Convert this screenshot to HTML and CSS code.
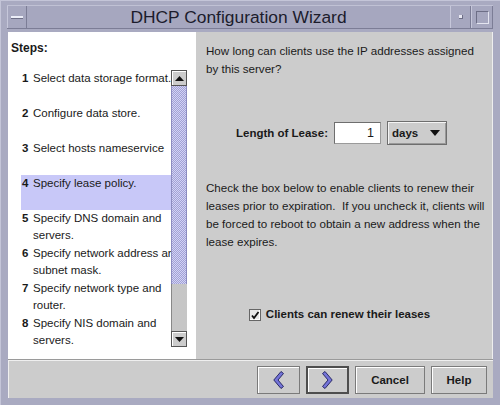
FILE: index.html
```html
<!DOCTYPE html>
<html>
<head>
<meta charset="utf-8">
<link rel="stylesheet" href="styles.css">
</head>
<body>
<div class="window">
  <div class="titlebar">
    <div class="tb-btn tb-menu"><span class="dash"></span></div>
    <div class="title">DHCP Configuration Wizard</div>
    <div class="tb-btn tb-min"><span class="dot"></span></div>
    <div class="tb-btn tb-max"><span class="sq"></span></div>
  </div>
  <div class="client">
    <div class="main">
      <div class="steps">
        <div class="steps-head">Steps:</div>
        <div class="scrollpane">
          <div class="list">
            <div class="item"><b class="num">1</b><span class="txt">Select data storage format.</span></div>
            <div class="item"><b class="num">2</b><span class="txt">Configure data store.</span></div>
            <div class="item"><b class="num">3</b><span class="txt">Select hosts nameservice</span></div>
            <div class="item selected"><b class="num">4</b><span class="txt">Specify lease policy.</span></div>
            <div class="item"><b class="num">5</b><span class="txt">Specify DNS domain and servers.</span></div>
            <div class="item"><b class="num">6</b><span class="txt">Specify network address and subnet mask.</span></div>
            <div class="item"><b class="num">7</b><span class="txt">Specify network type and router.</span></div>
            <div class="item"><b class="num">8</b><span class="txt">Specify NIS domain and servers.</span></div>
          </div>
          <div class="scrollbar">
            <div class="sb-btn"><svg width="9" height="5" viewBox="0 0 9 5"><path d="M0 5 L4.5 0 L9 5 Z" fill="#111"/></svg></div>
            <div class="sb-thumb"></div>
            <div class="sb-track"></div>
            <div class="sb-btn"><svg width="9" height="5" viewBox="0 0 9 5"><path d="M0 0 L4.5 5 L9 0 Z" fill="#111"/></svg></div>
          </div>
        </div>
      </div>
      <div class="content">
        <p class="question">How long can clients use the IP addresses assigned<br>by this server?</p>
        <div class="lease-row">
          <span class="lease-label">Length of Lease:</span>
          <span class="field">1</span>
          <span class="combo"><span class="combo-text">days</span><svg width="10" height="6" viewBox="0 0 10 6"><path d="M0 0 L10 0 L5 6 Z" fill="#111"/></svg></span>
        </div>
        <p class="info">Check the box below to enable clients to renew their<br>leases prior to expiration.&nbsp; If you uncheck it, clients will<br>be forced to reboot to obtain a new address when the<br>lease expires.</p>
        <div class="check-row">
          <span class="checkbox"><svg width="10" height="10" viewBox="0 0 10 10"><path d="M2 5.5 L4 8 L8.5 2" fill="none" stroke="#111" stroke-width="1.8"/></svg></span>
          <span class="check-label">Clients can renew their leases</span>
        </div>
      </div>
    </div>
    <div class="buttons">
      <button class="btn btn-nav"><svg width="11" height="18" viewBox="0 0 11 18"><path d="M8 0.5 L10.5 2.5 L5 9 L10.5 15.5 L8 17.5 L0.8 9 Z" fill="#7474d8" stroke="#2a2a66" stroke-width="1"/></svg></button>
      <button class="btn btn-nav btn-default"><svg width="11" height="18" viewBox="0 0 11 18"><path d="M3 0.5 L0.5 2.5 L6 9 L0.5 15.5 L3 17.5 L10.2 9 Z" fill="#7474d8" stroke="#2a2a66" stroke-width="1"/></svg></button>
      <button class="btn btn-cancel">Cancel</button>
      <button class="btn btn-help">Help</button>
    </div>
  </div>
</div>
</body>
</html>
```
FILE: styles.css
```css
html, body {
  margin: 0;
  padding: 0;
}
body {
  width: 500px;
  height: 405px;
  overflow: hidden;
  font-family: "Liberation Sans", Arial, sans-serif;
  font-size: 11.5px;
  color: #1a1a1a;
}
.window {
  width: 500px;
  height: 405px;
  box-sizing: border-box;
  background: #a9aac1;
  padding: 0 7px 7px 7px;
  display: flex;
  flex-direction: column;
  border-left: 1px solid #c4c5d8;
  border-top: 1px solid #c4c5d8;
}
.titlebar {
  height: 22px;
  margin-top: 4px;
  margin-bottom: 3px;
  margin-left: -1px;
  display: flex;
  align-items: stretch;
  background: #a6a7bf;
  border-top: 1px solid #c0c1d4;
  border-bottom: 1px solid #7c7d96;
}
.tb-btn {
  width: 20px;
  box-sizing: border-box;
  border-left: 1px solid #c6c7da;
  border-right: 1px solid #7c7d96;
  display: flex;
  align-items: center;
  justify-content: center;
}
.dash {
  width: 12px;
  height: 2px;
  background: #eceef8;
  border-bottom: 1px solid #6d6e86;
}
.title {
  flex: 1;
  text-align: center;
  font-size: 17.4px;
  line-height: 22px;
  color: #1c1c2c;
}
.tb-min {
  width: 21px;
}
.dot {
  width: 3px;
  height: 3px;
  background: #e8e8f2;
  border-right: 1px solid #6d6e86;
  border-bottom: 1px solid #6d6e86;
}
.tb-max {
  width: 22px;
}
.sq {
  width: 11px;
  height: 11px;
  border-top: 1px solid #6d6e86;
  border-left: 1px solid #6d6e86;
  border-right: 1px solid #e4e5f0;
  border-bottom: 1px solid #e4e5f0;
}
.client {
  flex: 1;
  display: flex;
  flex-direction: column;
  background: #cccccc;
}
.main {
  height: 327px;
  display: flex;
}
.steps {
  width: 188px;
  background: #ffffff;
  display: flex;
  flex-direction: column;
}
.steps-head {
  font-weight: bold;
  font-size: 12px;
  line-height: 15px;
  padding: 9px 0 0 3px;
  height: 15px;
  margin-bottom: 14px;
}
.scrollpane {
  margin-left: 13px;
  height: 277px;
  display: flex;
}
.list {
  width: 150px;
  overflow: hidden;
}
.item {
  width: 175px;
  height: 35px;
  line-height: 17px;
  display: grid;
  grid-template-columns: 12px 158px;
  align-content: start;
}
.item.selected {
  background: #c8c8f8;
}
.num {
  padding-left: 1px;
  font-weight: bold;
}
.scrollbar {
  width: 16px;
  display: flex;
  flex-direction: column;
}
.sb-btn {
  height: 16px;
  box-sizing: border-box;
  background: #cccccc;
  border: 1px solid #555555;
  box-shadow: inset 1px 1px #ffffff;
  display: flex;
  align-items: center;
  justify-content: center;
}
.sb-thumb {
  height: 198px;
  box-sizing: border-box;
  border-left: 1px solid #8c8cbf;
  border-right: 1px solid #8c8cbf;
  background-color: #bdbde6;
  background-image: repeating-conic-gradient(#a2a2d4 0 25%, #d2d2f6 0 50%);
  background-size: 2px 2px;
}
.sb-track {
  flex: 1;
  background: #c6c6c6;
  border-left: 1px solid #888888;
}
.content {
  flex: 1;
  padding: 10px 7px 0 10px;
  border-right: 1px solid #eeeeee;
}
.question, .info {
  margin: 0;
  line-height: 18px;
  font-size: 11.6px;
}
.lease-row {
  margin-top: 43px;
  height: 24px;
  display: flex;
  align-items: center;
  justify-content: center;
  gap: 6px;
  padding-right: 8px;
}
.lease-label {
  font-weight: bold;
}
.field {
  width: 47px;
  height: 22px;
  box-sizing: border-box;
  background: #ffffff;
  border: 1px solid #6e6e6e;
  border-right-color: #9a9a9a;
  border-bottom-color: #9a9a9a;
  text-align: right;
  padding-right: 6px;
  line-height: 20px;
  font-size: 12.5px;
}
.combo {
  width: 60px;
  height: 24px;
  box-sizing: border-box;
  border: 1px solid #6e6e6e;
  box-shadow: inset 1px 1px #f4f4f4, inset -1px -1px #999999;
  display: flex;
  align-items: center;
  justify-content: space-between;
  padding: 0 6px 0 4px;
  font-weight: bold;
}
.info {
  margin-top: 34px;
}
.check-row {
  margin-top: 56px;
  display: flex;
  align-items: center;
  justify-content: center;
  gap: 5px;
  line-height: 15px;
  padding-right: 12px;
}
.checkbox {
  width: 12px;
  height: 12px;
  box-sizing: border-box;
  border: 1px solid #666666;
  background: #e8e8e8;
  box-shadow: inset -1px -1px #ffffff;
  display: flex;
  align-items: center;
  justify-content: center;
}
.check-label {
  font-weight: bold;
}
.buttons {
  flex: 1;
  border-top: 1px solid #9a9a9a;
  box-shadow: inset 1px 1px #efefef;
  display: flex;
  justify-content: flex-end;
  align-items: flex-start;
  gap: 6px;
  padding: 6px 6px 0 0;
}
.btn {
  height: 28px;
  margin: 0;
  box-sizing: border-box;
  background: #cccccc;
  border: 1px solid #7a7a7a;
  box-shadow: inset 1px 1px #ffffff;
  font-family: "Liberation Sans", Arial, sans-serif;
  font-size: 11.5px;
  font-weight: bold;
  color: #1a1a1a;
  display: flex;
  align-items: center;
  justify-content: center;
  padding: 0;
}
.btn-nav {
  width: 43px;
}
.btn-default {
  border: 2px solid #4e4e4e;
}
.btn-cancel {
  width: 70px;
}
.btn-help {
  width: 56px;
}
```
